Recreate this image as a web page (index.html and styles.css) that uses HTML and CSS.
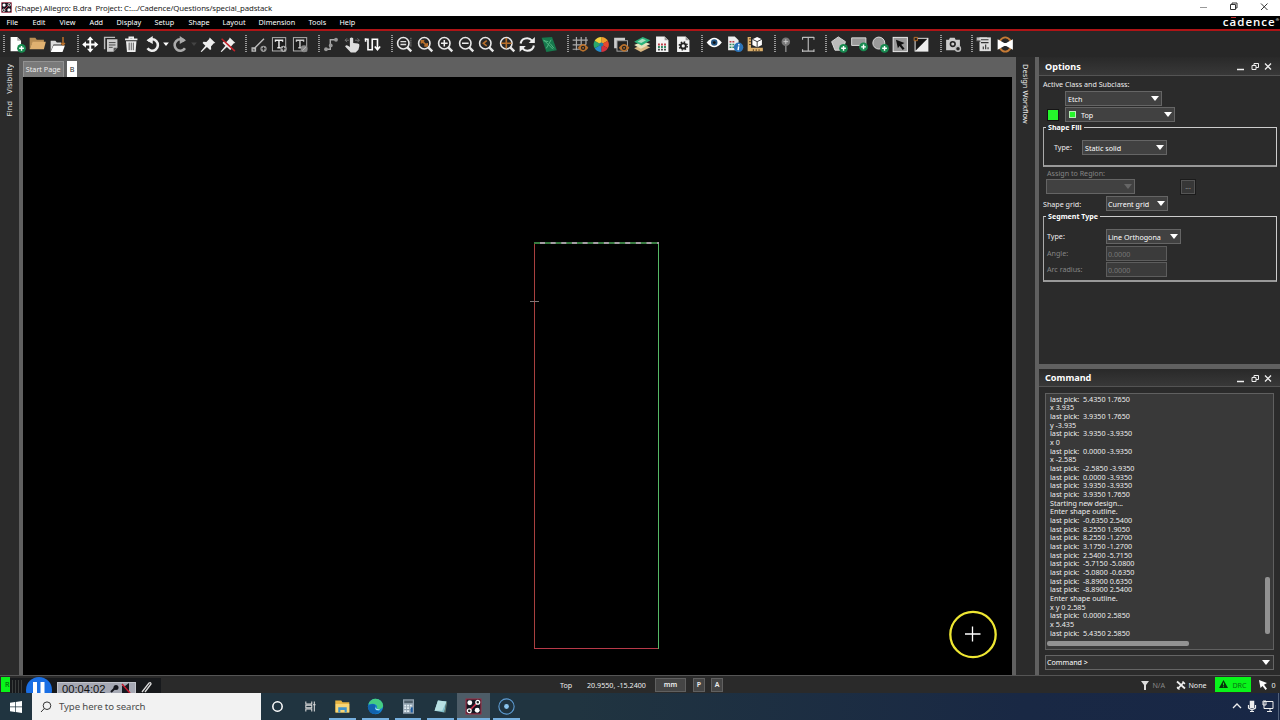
FILE: index.html
```html
<!DOCTYPE html>
<html lang="en">
<head>
<meta charset="utf-8">
<title>Allegro: B.dra</title>
<link rel="stylesheet" href="styles.css">
</head>
<body>
<svg width="0" height="0" class="defs">
<defs>
<g id="plus"><circle cx="14.5" cy="14" r="4.6" fill="#188a50"/><path d="M12 14h5M14.5 11.5v5" stroke="#fff" stroke-width="1.5"/></g>
<g id="lens"><circle cx="9" cy="8.7" r="6" fill="none" stroke="#e8e8e8" stroke-width="1.7"/><path d="M13.2 13l4.2 4.2" stroke="#e8e8e8" stroke-width="2.5"/></g>
<g id="eye"><path d="M7.500 13.500q5.500-8 11 0q-5.500 8-11 0z" fill="#b8702c"/><circle cx="13" cy="13.5" r="2.3" fill="#222"/><circle cx="13" cy="13.5" r="1" fill="#b8702c"/></g>
<g id="pin"><path d="M11.5 2.5l6 6-1.6.3-3 3.2.2 3-1.2.8-3.3-3.2L3 18l-1-.6 5-6-3-3 1-1.2 3 .1 3-3z" fill="#eee"/></g>
<g id="turn"><path d="M5.5 6.5A6 6 0 1 1 5 14" fill="none" stroke-width="2.7"/><path d="M10.5 1v8.5l-6.500-4z" stroke="none"/></g>
<g id="pads"><rect x="1" y="1" width="14" height="14" fill="#15151f" stroke="#a02b42"/><path d="M3 13L13 3" stroke="#d3304c" stroke-width="1.4"/><circle cx="4.5" cy="4.5" r="2.3" fill="#fff"/><circle cx="11.500" cy="11.500" r="2.3" fill="#fff"/><circle cx="12" cy="4" r="1.8" fill="#222" stroke="#fff" stroke-width="1.2"/><circle cx="4" cy="12" r="1.8" fill="#222" stroke="#fff" stroke-width="1.2"/></g>
</defs>
</svg>
<div class="app">
  <header class="titlebar">
    <svg class="appicon" viewBox="0 0 16 16"><use href="#pads"/></svg>
    <span class="title">(Shape) Allegro: B.dra&nbsp; Project: C:.../Cadence/Questions/special_padstack</span>
    <svg class="winctl" viewBox="0 0 80 16" fill="none" stroke="#333"><path d="M9 7.500h7" stroke="#999"/><path d="M39.500 4.500h5v5h-5zM41 4.500v-1.500h5v5h-1.500M70 3.500l6.500 6.500M76.500 3.500L70 10"/></svg>
  </header>
  <nav class="menubar">
    <div class="menus"><span>File</span><span>Edit</span><span>View</span><span>Add</span><span>Display</span><span>Setup</span><span>Shape</span><span>Layout</span><span>Dimension</span><span>Tools</span><span>Help</span></div>
    <div class="brand">c<span class="macron">a</span>dence<sup>®</sup></div>
  </nav>
  <div class="toolbar">
    <div class="group g1">
      <svg viewBox="0 0 20 20"><path d="M3 2h7l4 4v11H3z" fill="#fff"/><path d="M10 2v4h4z" fill="#aaa"/><use href="#plus"/></svg>
      <svg viewBox="0 0 20 20"><path d="M2 3h6l1.500 2H17v3H5L2 15z" fill="#b98e54"/><path d="M5 7h14l-2 8H2z" fill="#e0b170"/></svg>
      <svg viewBox="0 0 20 20"><path d="M2 6h5l1.500 2H13v2H5l-3 7z" fill="#ddd"/><path d="M5 11h12l-2.500 7H2z" fill="#fff"/><path d="M15 2v8M13 8.500l2 2 2-2" stroke="#b8702c" stroke-width="1.600" fill="none"/></svg>
    </div>
    <div class="group g2">
      <svg viewBox="0 0 20 20"><path d="M10 3v14M3 10h14" stroke="#fff" stroke-width="2"/><path d="M10 1.500l3.500 4h-7zM10 18.500l3.500-4h-7zM1.500 10l4-3.500v7zM18.500 10l-4-3.500v7z" fill="#fff"/></svg>
      <svg viewBox="0 0 20 20"><path d="M3 15V2.500h11" fill="none" stroke="#bbb" stroke-width="1.500"/><path d="M5.500 4.500h11v9l-4 4h-7z" fill="#ccc"/><path d="M7.500 8h7M7.500 10.500h7M7.500 13h4" stroke="#444"/><path d="M12.500 17.500v-4h4z" fill="#555"/></svg>
      <svg viewBox="0 0 20 20"><path d="M3.500 4.500h13M8 4V2.500h4V4" fill="none" stroke="#eee" stroke-width="1.800"/><path d="M4.500 6.500h11l-1 11.500h-9z" fill="#eee"/><path d="M7.800 8v8M10 8v8M12.200 8v8" stroke="#555"/></svg>
      <svg viewBox="0 0 20 20" fill="#eee" stroke="#eee"><use href="#turn"/></svg>
      <svg class="caret" viewBox="0 0 8 20"><path d="M1 8h6l-3 3.500z" fill="#fff"/></svg>
      <svg viewBox="0 0 20 20" fill="#aaa" stroke="#aaa"><use href="#turn" transform="translate(20 0) scale(-1 1)"/></svg>
      <svg class="caret" viewBox="0 0 8 20"><path d="M1 8h6l-3 3.500z" fill="#444"/></svg>
      <svg viewBox="0 0 20 20"><use href="#pin"/></svg>
      <svg viewBox="0 0 20 20"><use href="#pin"/><path d="M3 4l14 13" stroke="#c32028" stroke-width="1.600"/></svg>
    </div>
    <div class="group g3">
      <svg viewBox="0 0 20 20"><path d="M4 15L15 4M2.500 13.500h3.500v3.500H2.500z" stroke="#bbb" stroke-width="1.400" fill="#444"/><circle cx="14.500" cy="14.500" r="3.300" fill="#999"/><path d="M12.500 14.500h4M14.500 12.500v4" stroke="#222"/></svg>
      <svg viewBox="0 0 20 20"><rect x="2.800" y="2.800" width="14" height="14" fill="#1d1d1d" stroke="#bbb"/><path d="M6 7V5.500h7.500V7M9.700 5.500v8M8 13.500h3.500" stroke="#eee" stroke-width="1.500" fill="none"/><circle cx="14.500" cy="14.500" r="3.300" fill="#aaa"/><path d="M12.500 14.500h4M14.500 12.500v4" stroke="#222"/></svg>
      <svg viewBox="0 0 20 20"><rect x="2.800" y="2.800" width="14" height="14" fill="#1d1d1d" stroke="#bbb"/><path d="M6 7V5.500h7.500V7M9.700 5.500v8M8 13.500h3.500" stroke="#ccc" stroke-width="1.500" fill="none"/><circle cx="14" cy="14.500" r="3.600" fill="#888"/><path d="M12 16.500l4-4" stroke="#bbb"/></svg>
    </div>
    <div class="group g4">
      <svg viewBox="0 0 20 20"><path d="M4 15h5V5h7" fill="none" stroke="#aaa" stroke-width="1.500"/><circle cx="4.500" cy="15" r="2" fill="#999"/><circle cx="9.500" cy="11" r="2" fill="#999"/><circle cx="15" cy="5" r="2" fill="#999"/></svg>
      <svg viewBox="0 0 20 20"><path d="M7.500 3.500q1.700-2 3.500 0v5l5 .5q2 .5 1.500 2.500l-1 4-3 3H8.500L2.500 12q1-2 3-.8l2 1.300z" fill="#ddd"/><path d="M2.500 5.500h4M4.500 3.500l-2 2 2 2M13 5.500h4.500M15.500 3.500l2 2-2 2" stroke="#777" fill="none"/></svg>
      <svg viewBox="0 0 20 20" fill="none" stroke="#fff" stroke-width="1.700"><path d="M2 4.500h3.500v11H10v-11h5.500V15M3 7V3.500M12.700 12l2.800 3.500 2.800-3.500"/></svg>
    </div>
    <div class="group g5">
      <svg viewBox="0 0 20 20"><use href="#lens"/><path d="M6 7h6M6 10h6" stroke="#ddd" stroke-width="1.500"/><path d="M17 3v9" stroke="#aaa" stroke-dasharray="1 1"/></svg>
      <svg viewBox="0 0 20 20"><use href="#lens"/><path d="M6 6l6 5.500M6 9V6h3M12 8.500v3H9" stroke="#b8702c" stroke-width="1.700" fill="none"/></svg>
      <svg viewBox="0 0 20 20"><use href="#lens"/><path d="M5.500 8.700h7M9 5.200v7" stroke="#eee" stroke-width="1.600"/></svg>
      <svg viewBox="0 0 20 20"><use href="#lens"/><path d="M5.500 8.700h7" stroke="#eee" stroke-width="1.600"/></svg>
      <svg viewBox="0 0 20 20"><use href="#lens"/><path d="M10.500 6L7 8.700l3.500 2.700" stroke="#b8702c" stroke-width="1.700" fill="none"/></svg>
      <svg viewBox="0 0 20 20"><use href="#lens"/><path d="M3.500 8.700h11M9 3.200v11" stroke="#b8702c" stroke-width="1.700"/></svg>
      <svg viewBox="0 0 20 20"><path d="M3 9q1-5.500 7-5.500 3 0 5 2.500M17 11q-1 5.500-7 5.500-3 0-5-2.500" stroke="#eee" stroke-width="2.200" fill="none"/><path d="M18 2v6.500h-6.500zM2 18v-6.500h6.500z" fill="#eee"/></svg>
      <svg viewBox="0 0 20 20"><path d="M3 3l11-1 5 14-11 2z" fill="#16784c"/><path d="M5 5l10 10M8 14l5-9M5 6l5 1M12 9l4 5" stroke="#54b783"/></svg>
    </div>
    <div class="group g6">
      <svg viewBox="0 0 20 20"><path d="M6 2v14M11 2v14M16 2v8M2 5.500h16M2 10.500h14M2 15h8" stroke="#aaa" stroke-width="1.300"/><use href="#eye"/></svg>
      <svg viewBox="0 0 20 20"><path d="M10 10V2a8 8 0 0 1 6.900 4z" fill="#f0a02c"/><path d="M10 10l6.900-4a8 8 0 0 1 0 8z" fill="#e64a2e"/><path d="M10 10l6.900 4a8 8 0 0 1-6.900 4z" fill="#d5303c"/><path d="M10 10v8a8 8 0 0 1-6.900-4z" fill="#248ccb"/><path d="M10 10l-6.900 4a8 8 0 0 1 0-8z" fill="#29a76b"/><path d="M10 10L3.100 6A8 8 0 0 1 10 2z" fill="#f2d240"/><circle cx="10" cy="10" r="2.200" fill="#237ea4"/></svg>
      <svg viewBox="0 0 20 20"><path d="M2.500 14V3H14v3H6v8z" fill="#ccc"/><rect x="5.500" y="6" width="11" height="11" fill="#222" stroke="#aaa"/><use href="#eye"/></svg>
      <svg viewBox="0 0 20 20"><path d="M1.500 14l9-4 8 3-10 5z" fill="#dab782"/><path d="M1.500 10.500l9-4 8 3-10 5z" fill="#e8e3bd"/><path d="M1.500 7l9-5 8 3.500-9 5.500z" fill="#2db37c"/><path d="M5 7l5-3 4 1.500-5 3z" fill="#a9dfbf"/></svg>
      <svg viewBox="0 0 20 20"><path d="M3.500 1.500h9l4 4V18h-13z" fill="#f4f4f4"/><path d="M12.500 1.500v4h4z" fill="#999"/><path d="M5.500 10h9" stroke="#b93b46" stroke-width="2" stroke-dasharray="2 1.200"/><path d="M5.500 12.700h9" stroke="#2c8861" stroke-width="2" stroke-dasharray="2 1.200"/><path d="M5.500 15.400h9" stroke="#444" stroke-width="2" stroke-dasharray="2 1.200"/></svg>
      <svg viewBox="0 0 20 20"><path d="M3.500 1.500h9l4 4V18h-13z" fill="#f4f4f4"/><path d="M12.500 1.500v4h4z" fill="#999"/><circle cx="10" cy="11.500" r="2.700" fill="none" stroke="#222" stroke-width="2"/><circle cx="10" cy="11.500" r="4.200" fill="none" stroke="#222" stroke-width="1.500" stroke-dasharray="1.650 1.650"/></svg>
    </div>
    <div class="group g7">
      <svg viewBox="0 0 20 20"><path d="M2 8q8-10 16 0-8 10-16 0z" fill="#fff"/><circle cx="10" cy="8" r="3.400" fill="#235583"/><circle cx="10" cy="8" r="1.500" fill="#111"/></svg>
      <svg viewBox="0 0 20 20"><path d="M2.500 1.500h7l4 4V16h-11z" fill="#eee"/><path d="M4 7h6" stroke="#b93b46" stroke-width="1.600" stroke-dasharray="2 1"/><path d="M4 10h6M4 13h6" stroke="#2c8861" stroke-width="1.600" stroke-dasharray="2 1"/><circle cx="13.500" cy="13" r="5" fill="#2b73b8"/><path d="M13.800 9.500v1.500M13.600 12l-.6 4" stroke="#fff" stroke-width="1.500"/></svg>
      <svg viewBox="0 0 20 20"><path d="M2 2h3.500v11.500H18V17H2z" fill="#ddb06a"/><path d="M3.500 4h2M3.500 7h2M3.500 10h2M8 17v-2M11 17v-2M14 17v-2" stroke="#553b1c"/><path d="M12 2l5 2.500v6L12 13l-5-2.500v-6z" fill="#fff"/><path d="M7 4.500l5 2.500 5-2.500M12 7v6" stroke="#333" fill="none"/></svg>
    </div>
    <div class="group g8">
      <svg viewBox="0 0 20 20"><path d="M8.500 8v10" stroke="#888" stroke-width="1.500"/><circle cx="8.500" cy="7" r="4.500" fill="#777"/><path d="M6 7h5M8.500 4.500v5" stroke="#ccc"/></svg>
      <svg viewBox="0 0 20 20"><path d="M4 2.500h12M4 17h12M10 3v14M4 2v3M16 2v3M4 15v3M16 15v3" stroke="#bbb" stroke-width="1.200"/></svg>
    </div>
    <div class="group g9">
      <svg viewBox="0 0 20 20"><path d="M9 2l7.500 5-3 9h-8l-3.500-9z" fill="#bbb" stroke="#ddd"/><use href="#plus"/></svg>
      <svg viewBox="0 0 20 20"><path d="M2 3h15v8H2z" fill="#999" stroke="#ddd"/><use href="#plus" y="-1.500"/></svg>
      <svg viewBox="0 0 20 20"><circle cx="8.500" cy="8.500" r="6.300" fill="#999" stroke="#ddd"/><use href="#plus"/></svg>
      <svg viewBox="0 0 20 20"><rect x="2.500" y="2.500" width="15" height="15" fill="#999" stroke="#eee"/><path d="M5.500 5l9 3.500-3.500 1.800 3.500 4-1.800 1.400-3.500-4L7.500 14z" fill="#111"/></svg>
      <svg viewBox="0 0 20 20"><path d="M3 3h14.500v14.500H3z" fill="#eee"/><path d="M4 16.500V4h12.500z" fill="#161616"/><path d="M2.500 2.500h3.500v3.500h-3.500z" fill="#222" stroke="#b8702c"/></svg>
    </div>
    <div class="group g10">
      <svg viewBox="0 0 20 20"><path d="M2.500 5h3l1-2h5l1 2h4.500v11H2.500z" fill="#ccc"/><circle cx="9.500" cy="9.500" r="3.300" fill="#222"/><circle cx="9.500" cy="9.500" r="1.600" fill="#ccc"/><circle cx="15" cy="14.500" r="2.600" fill="#222" stroke="#bbb" stroke-width="1.500"/></svg>
    </div>
    <div class="group g11">
      <svg viewBox="0 0 20 20"><path d="M2 2.500h11v4H2z" fill="#bbb"/><path d="M5 2.500h12V17H5z" fill="#ddd"/><path d="M2 6.500h4M6.500 5h8M6.500 8h8M9 15v-3M11.500 15v-5M14 15v-2" stroke="#333" stroke-width="1.200"/></svg>
      <svg viewBox="0 0 20 20"><path d="M4 6.500q6-8 12 0M4 13.500q6 8 12 0" fill="none" stroke="#c57a35" stroke-width="2"/><path d="M2 4.500v11l7-4h2l7 4v-11l-7 4H9z" fill="#fff"/></svg>
    </div>
  </div>
  <main class="workspace">
    <aside class="rail left"><span>Visibility</span><span>Find</span></aside>
    <section class="editor">
      <div class="tabs"><span class="tab">Start Page</span><span class="tab active">B</span></div>
      <svg class="canvas" viewBox="23 77 989 598" fill="none">
        <path d="M534.500 243v406" stroke="#a8403f"/>
        <path d="M534 648.500h125" stroke="#b83a49"/>
        <path d="M658.500 243v406" stroke="#55b865"/>
        <path d="M534 243h125" stroke="#387c40" stroke-width="2"/>
        <path d="M540 243h119" stroke="#a59da5" stroke-width="2" stroke-dasharray="5 5.650"/>
        <path d="M530 301.500h9" stroke="#807777"/>
        <circle cx="973" cy="634.500" r="22.700" stroke="#eee632" stroke-width="2.300"/>
        <path d="M965 634h15.500M972.500 626.500v15" stroke="#fff" stroke-width="1.300"/>
      </svg>
    </section>
    <aside class="rail right"><span>Design Workflow</span></aside>
    <div class="docks">
      <section class="panel options">
        <div class="head"><h2>Options</h2><svg viewBox="0 0 40 18" fill="none" stroke="#eee"><path d="M3 12.500h7" stroke-width="1.500"/><path d="M18 8.500h4v4h-4zM20 8V6.500h4.500v4H22"/><path d="M31 6.500l6 6M37 6.500l-6 6" stroke-width="1.300"/></svg></div>
        <div class="form">
          <div class="lab first">Active Class and Subclass:</div>
          <div class="row r1"><div class="combo w96">Etch</div></div>
          <div class="row r2"><i class="swatch"></i><div class="combo w110"><i class="dot"></i>Top</div></div>
          <fieldset class="fill"><legend>Shape Fill</legend><label>Type:</label><div class="combo w85">Static solid</div></fieldset>
          <div class="lab assign">Assign to Region:</div>
          <div class="row r3"><div class="combo w89 off"></div><button class="more">...</button></div>
          <div class="row r4"><label>Shape grid:</label><div class="combo w62">Current grid</div></div>
          <fieldset class="segment"><legend>Segment Type</legend>
            <label>Type:</label><div class="combo w75">Line Orthogona</div>
            <label class="dim">Angle:</label><div class="input">0.0000</div>
            <label class="dim">Arc radius:</label><div class="input">0.0000</div>
          </fieldset>
        </div>
      </section>
      <section class="panel command">
        <div class="head"><h2>Command</h2><svg viewBox="0 0 40 18" fill="none" stroke="#eee"><path d="M3 12.500h7" stroke-width="1.500"/><path d="M18 8.500h4v4h-4zM20 8V6.500h4.500v4H22"/><path d="M31 6.500l6 6M37 6.500l-6 6" stroke-width="1.300"/></svg></div>
        <div class="log"><pre>last pick:  5.4350 1.7650
x 3.935
last pick:  3.9350 1.7650
y -3.935
last pick:  3.9350 -3.9350
x 0
last pick:  0.0000 -3.9350
x -2.585
last pick:  -2.5850 -3.9350
last pick:  0.0000 -3.9350
last pick:  3.9350 -3.9350
last pick:  3.9350 1.7650
Starting new design...
Enter shape outline.
last pick:  -0.6350 2.5400
last pick:  8.2550 1.9050
last pick:  8.2550 -1.2700
last pick:  3.1750 -1.2700
last pick:  2.5400 -5.7150
last pick:  -5.7150 -5.0800
last pick:  -5.0800 -0.6350
last pick:  -8.8900 0.6350
last pick:  -8.8900 2.5400
Enter shape outline.
x y 0 2.585
last pick:  0.0000 2.5850
x 5.435
last pick:  5.4350 2.5850</pre><i class="vbar"></i><i class="hbar"></i></div>
        <div class="combo prompt">Command &gt;</div>
      </section>
    </div>
  </main>
  <div class="status">
    <span class="run">R</span>
    <div class="recorder"><svg class="grip" viewBox="0 0 16 14"><path d="M2.500 1v13M5.500 1v13M8.500 1v13M11.500 1v13" stroke="#3a3d3d"/></svg>
      <svg class="pause" viewBox="0 0 26 16"><circle cx="13" cy="13" r="13" fill="#1a6fe4"/><path d="M7 5h4v11H7zM14.500 5h4v11h-4z" fill="#fff"/></svg>
      <div class="timer">00:04:02<svg viewBox="0 0 24 10"><path d="M2 9l4-4" stroke="#16181f" stroke-width="2"/><circle cx="7" cy="4.500" r="2.500" fill="#16181f"/><path d="M13 3h3l4-3v10h-7z" fill="#16181f"/><path d="M13 1l8 9" stroke="#c5192d" stroke-width="1.500"/></svg></div>
      <svg class="pen" viewBox="0 0 14 12"><path d="M2 11l7-9q2-1 2 1l-6 8" fill="none" stroke="#ddd" stroke-width="1.300"/></svg>
    </div>
    <span class="layer">Top</span><span class="coords">20.9550, -15.2400</span><span class="btn mm">mm</span><span class="btn pa">P</span><span class="btn pa last">A</span>
    <div class="right-status">
      <svg class="s" viewBox="0 0 10 12"><path d="M1 2h8L6 6v5H4V6z" fill="#ddd"/></svg><span class="na">N/A</span>
      <svg class="s none" viewBox="0 0 10 12"><path d="M1 2.500l8 7M1.500 10L8 3" stroke="#eee" stroke-width="1.800"/><path d="M6.500 2.500l2.500 2.500M1 8l2.500 2.500" stroke="#eee" stroke-width="1.300"/></svg><span class="nonet">None</span>
      <span class="drc"><svg viewBox="0 0 10 10"><path d="M5 0l5 9H0z" fill="#06340b"/><path d="M5 3v3M5 7v1" stroke="#0ff31b"/></svg>DRC</span>
      <svg class="s ptr" viewBox="0 0 10 12"><path d="M1 1l8 3-3 1.800 3 4-1.500 1.200-3-4L2.500 9z" fill="#fff"/></svg><span>0</span>
    </div>
  </div>
  <footer class="taskbar">
    <div class="start"><svg viewBox="0 0 12 12"><path d="M0 1.700l5-.7v4.600H0zM5.700.9L12 0v5.600H5.700zM0 6.300h5v4.600l-5-.7zM5.700 6.300H12V12l-6.300-.9z" fill="#fff"/></svg></div>
    <div class="search"><svg viewBox="0 0 12 12"><circle cx="7" cy="4.700" r="3.800" fill="none" stroke="#333"/><path d="M4.300 7.500L1 11" stroke="#333"/></svg>Type here to search</div>
    <div class="task"><svg viewBox="0 0 20 20"><circle cx="10" cy="10" r="5.500" fill="none" stroke="#fff" stroke-width="1.800"/></svg></div>
    <div class="task"><svg viewBox="0 0 20 20" fill="none" stroke="#ddd" stroke-width="1.200"><path d="M4.500 4v3h7V4M4.500 16v-3h7v3M4.500 8.500h7v3h-7zM14.500 4v12M13 8h3"/></svg></div>
    <div class="task open"><svg viewBox="0 0 20 20"><path d="M1.500 3h7l1.500 2h8v12h-16.500z" fill="#e7b442"/><path d="M2 7h16v10H2z" fill="#f8d676"/><path d="M5 17v-6h10v6h-2.500v-3h-5v3z" fill="#3f93cc"/></svg></div>
    <div class="task open"><svg viewBox="0 0 20 20"><circle cx="10" cy="10" r="9" fill="#1683d0"/><path d="M1.500 7.500Q4 1 10 1q8 .5 9 8-.5 4-5.500 4-3-.5-1.500-3Q10 5 1.500 7.500z" fill="#45cc83"/><path d="M1.200 9q7-4 9 0-3 7 5.500 7-5.500 4.500-11 1.500-4-3-3.500-8.500z" fill="#1262ad"/><path d="M10.500 9.500q-2 4 5 4l-1.500 1q-6 0-3.500-5z" fill="#cff"/></svg></div>
    <div class="task open"><svg viewBox="0 0 20 20"><path d="M3.500 1.500h13V18.500h-13z" fill="#92a2af"/><path d="M5 3h10v3H5z" fill="#4e5e69"/><path d="M5 9h10M5 12h10M5 15.500h7" stroke="#e2edf2" stroke-width="2" stroke-dasharray="2.300 1"/><path d="M12.500 11h2.500v6h-2.500z" fill="#1b5aa0"/></svg></div>
    <div class="task open"><svg viewBox="0 0 20 20"><path d="M7 3l10 1-2.500 13L3 15z" fill="#82bec9"/><path d="M7 3l10 1-5 11-9 0z" fill="#b9e0e2"/><path d="M14.500 17L17 4l.8 1-2 12z" fill="#6b7f72"/></svg></div>
    <div class="task open current"><svg viewBox="0 0 16 16"><use href="#pads"/></svg></div>
    <div class="task open"><svg viewBox="0 0 20 20"><circle cx="10" cy="10" r="9" fill="none" stroke="#5d9bd1" stroke-width="1.300"/><circle cx="10" cy="10" r="2.800" fill="#8bc5ee"/></svg></div>
    <svg class="tray" viewBox="0 0 48 20" fill="none" stroke="#eee"><path d="M7 12l4-4 4 4" stroke-width="1.300"/><path d="M24.500 5.500h3v6h-3z" fill="#eee" stroke-width="1.500"/><path d="M22.500 9v3q3.500 3 7 0V9M26 14v2M24 15.500h4" stroke-width="1.200"/><path d="M38 5.500h9v7h-9zM41 15.500h5M44 12.500v3M37 5h3v4h-3z"/></svg>
    <i class="edge"></i>
  </footer>
</div>
</body>
</html>
```

FILE: styles.css
```css
* { box-sizing: border-box; }
body { margin: 0; background: #2b2b2b; font-family: "Noto Sans", "Open Sans", sans-serif; font-size: 7.150px; color: #eee; overflow: hidden; }
.defs { display: none; }
svg { display: block; flex: none; }
.app { width: 1280px; height: 720px; display: grid; grid-template-rows: 16px 15px 26px 618px 18px 27px; overflow: hidden; white-space: nowrap; }

.titlebar { background: #fff; color: #222; display: flex; align-items: center; padding: 0 9px 1px 1px; }
.appicon { width: 11px; height: 11px; margin-right: 3px; }
.title { font-size: 7.8px; letter-spacing: -.1px; flex: 1; }
.winctl { width: 80px; height: 16px; }

.menubar { background: #000; border-bottom: 2px solid #ae1416; display: flex; justify-content: space-between; color: #fff; }
.menus { display: grid; grid-template-columns: 26px 27px 30px 27px 38px 34px 34px 36px 50px 31px 30px; padding-left: 6.500px; line-height: 12px; font-size: 7.250px; }
.brand { font: 600 11.500px/11px "Open Sans", sans-serif; letter-spacing: 1px; padding-right: 1px; }
.brand sup { font-size: 4px; line-height: 0; vertical-align: 5px; letter-spacing: 0; }
.macron { background: linear-gradient(#c03030, #c03030) 1px 1px / 5px 1px no-repeat; display: inline-block; }

.toolbar { background: #272727; display: flex; align-items: center; padding-left: 3px; }
.group { display: flex; align-items: center; height: 20px; flex: none; }
.group::before { content: ""; width: 2px; height: 18px; margin-right: 1.500px; background: repeating-linear-gradient(#999 0 1px, transparent 1px 2px); }
.group svg { width: 20.500px; height: 19px; }
.group .caret { width: 8px; margin-left: -.5px; margin-right: 0; }
.g1 { width: 73.500px; } .g2 { width: 168.500px; } .g3 { width: 72.500px; } .g4 { width: 73px; } .g5 { width: 176px; } .g6 { width: 134px; }
.g7 { width: 73px; } .g8 { width: 51.500px; } .g9 { width: 114.500px; } .g10 { width: 31px; } .g11 { width: 60px; }

.workspace { display: grid; grid-template-columns: 19px 997px 19px 245px; background: #606060; }
.rail { background: #2b2b2b; display: flex; flex-direction: column; align-items: center; padding-top: 7px; font-size: 7.700px; }
.rail span { writing-mode: vertical-rl; line-height: 11px; }
.left span { transform: rotate(180deg); }
.left { gap: 7.500px; }
.right { padding-right: 1px; font-size: 7.500px; }
.editor { padding: 0 4px; display: grid; grid-template-rows: 20px 598px; }
.canvas { width: 989px; height: 598px; background: #000; }
.tabs { display: flex; align-items: flex-end; gap: 3.500px; }
.tab { height: 16px; width: 40.500px; border: 1px solid #929292; border-bottom: 0; background: #7a7a7a; text-align: center; line-height: 14px; font-size: 7.200px; }
.tab.active { width: 10px; background: #fff; color: #222; border-color: #fff; }

.docks { display: grid; grid-template-rows: 307px 306px; gap: 5px; padding-left: 4px; }
.panel { background: #2b2b2b; min-width: 0; }
.head { height: 19px; display: flex; justify-content: space-between; background: linear-gradient(#292929, #383838); border-bottom: 1px solid #545454; padding: 0 6px 0 6px; }
.head h2 { margin: 0; font-size: 9.100px; line-height: 19px; color: #fff; }
.head svg { width: 40px; height: 18px; }
.form { padding-left: 4px; }
.lab { line-height: 10px; }
.first { padding-top: 4px; height: 15px; line-height: 9px; }
.row { display: flex; align-items: center; }
.combo { height: 15px; background: #414141; border: 1px solid #656565; position: relative; line-height: 14px; padding-left: 2px; flex: none; color: #fff; overflow: hidden; }
.combo::after { content: ""; position: absolute; right: 2px; top: 4px; border: 4px solid transparent; border-top: 5px solid #fff; border-bottom: 0; }
.w96 { width: 97px; } .w110 { width: 110px; } .w85 { width: 85px; } .w89 { width: 89px; } .w62 { width: 62px; } .w75 { width: 75px; }
.w110 { display: flex; align-items: center; }
.r1 { padding-left: 22px; }
.r2 { padding: 1px 0 0 5px; }
.swatch { width: 10px; height: 10px; background: #25f52b; margin-right: 7px; outline: 1px solid #151515; }
.dot { width: 7px; height: 7px; background: #25f52b; border: 1px solid #b7eab7; margin: 0 5px 0 1px; }
fieldset { margin: 0 3px 0 0; padding: 0; border: 1px solid #ccc; border-bottom: 2px solid #999; border-left-color: #aaa; min-width: 0; }
legend { margin-left: -1px; padding: 0 2px; font-weight: bold; font-size: 7.100px; line-height: 9px; height: 9px; color: #fff; }
.fill legend { margin-left: -8px; }
.fill { height: 44px; padding-left: 10px; display: grid; grid-template-columns: 28px auto; padding-top: 8px; line-height: 15px; margin-top: 1px; }
.assign { padding-left: 4px; margin-top: 1px; color: #858585; height: 11px; line-height: 11px; }
.r3 { padding-left: 3px; height: 15px; }
.off::after { border-top-color: #666; }
.more { width: 14px; height: 14px; margin-left: 46px; padding: 0; background: #373737; border: 1px solid #555; outline: 1px solid #1b1b1b; color: #999; font: 7px/10px "Noto Sans", sans-serif; }
.r4 { padding-top: 2px; height: 17px; }
.r4 label { width: 63px; }
.r4 .combo { padding-left: 1px; }
.segment { height: 70px; display: grid; grid-template-columns: 59px auto; grid-auto-rows: 16.500px; padding: 8px 0 0 3px; line-height: 15px; margin-top: 1px; }
.segment .combo { padding-left: 1px; }
.dim { color: #858585; }
.input { width: 61px; height: 15px; background: #3b3b3b; border: 1px solid #5d5d5d; padding-left: 1px; color: #777; line-height: 14px; }

.command .head { height: 18px; }
.command h2 { line-height: 18px; }
.log { position: relative; margin: 5.500px 6px 5px; height: 257.500px; background: #393939; border: 1px solid #606060; padding: 1.200px 4px; }
.log pre { margin: 0; font: 7.200px/8.670px "Noto Sans", sans-serif; }
.vbar, .hbar { position: absolute; background: #929292; border-radius: 2px; }
.vbar { right: 3px; top: 183px; width: 5px; height: 57px; }
.hbar { left: 1px; bottom: 3px; width: 142px; height: 5px; }
.prompt { margin: 0 6px; line-height: 13px; padding-left: 1px; background: #333; }
.prompt::after { right: 3px; }

.status { background: #2a2a2a; border-top: 1.500px solid #555; display: flex; align-items: center; font-size: 7.150px; overflow: hidden; padding-left: 1px; }
.run { width: 9px; height: 15px; background: #08f41a; color: #09510e; padding-left: 4px; line-height: 14px; }
.recorder { width: 151px; display: flex; align-items: flex-end; background: #17191c; align-self: flex-end; height: 15px; margin-right: 399px; }
.grip { width: 16px; height: 14px; }
.pause { width: 26px; height: 16px; }
.timer { margin-left: 5px; width: 79px; height: 11px; background: #a5a8b3; color: #111; display: flex; font: 11.200px/13px "Liberation Sans", sans-serif; padding-left: 4px; border: 1px solid #c3c5cc; border-bottom: 0; }
.timer svg { width: 24px; height: 10px; margin-left: 3px; }
.pen { width: 14px; height: 12px; margin-left: 4px; }
.layer { width: 27px; }
.coords { width: 68px; }
.btn { height: 14px; line-height: 12px; background: #454545; border: 1px solid #606060; text-align: center; font-weight: 600; font-size: 7px; }
.mm { width: 31px; }
.pa { width: 12px; margin-left: 7px; }
.last { margin-left: 6px; }
.right-status { margin-left: auto; display: flex; align-items: center; padding-right: 4.500px; }
.s { width: 10px; height: 12px; }
.na { color: #888; margin-left: 2.500px; width: 24px; }
.nonet { margin-left: 2px; width: 27px; }
.drc { width: 36px; height: 15px; background: #08f41a; color: #087112; display: flex; align-items: center; padding-left: 4px; gap: 4px; margin-right: 7px; }
.drc svg { width: 9px; height: 9px; }
.ptr { margin-right: 3px; }

.taskbar { background: linear-gradient(90deg, #203440, #203440 45%, #192844 80%, #182746); display: flex; position: relative; }
.start { width: 32px; display: flex; align-items: center; justify-content: center; }
.start svg { width: 12px; height: 12px; }
.search { width: 229px; background: #f2f2f2; color: #4a4a4a; display: flex; align-items: center; font-size: 9.600px; letter-spacing: -.1px; padding-left: 8px; gap: 7px; }
.search svg { width: 12px; height: 12px; }
.task { width: 32.700px; display: flex; align-items: center; justify-content: center; position: relative; }
.task svg { width: 17px; height: 17px; }
.open::after { content: ""; position: absolute; left: 3px; right: 3px; bottom: 0; height: 2px; background: #76b0df; }
.current { background: #4d5c67; }
.current::after { left: 0; right: 0; }
.tray { width: 48px; height: 20px; margin: 3px 4px 0 auto; }
.edge { border-left: 1px solid #52617a; width: 2px; }
```
